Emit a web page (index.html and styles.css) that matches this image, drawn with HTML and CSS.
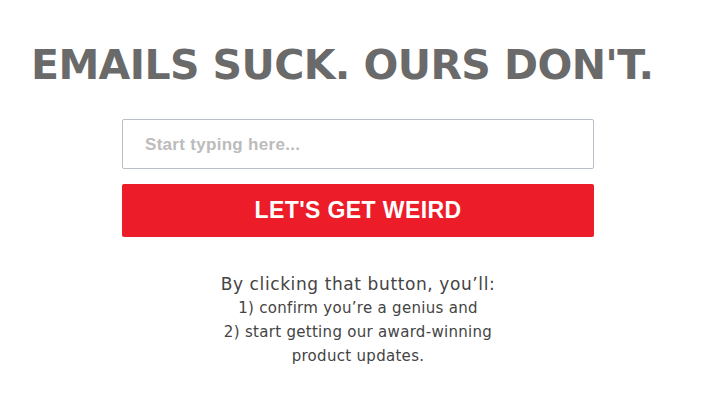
FILE: index.html
```html
<!DOCTYPE html>
<html>
<head>
<meta charset="utf-8">
<link rel="stylesheet" href="styles.css">
</head>
<body>
<div class="page">
  <h1 class="title">EMAILS SUCK. OURS DON'T.</h1>
  <form class="signup">
    <input class="email" type="text" placeholder="Start typing here...">
    <button class="cta" type="button">LET'S GET WEIRD</button>
  </form>
  <div class="note">
    <p class="lead">By clicking that button, you’ll:</p>
    <p class="line">1) confirm you’re a genius and</p>
    <p class="line">2) start getting our award-winning</p>
    <p class="line">product updates.</p>
  </div>
</div>
</body>
</html>
```
FILE: styles.css
```css
html, body { margin: 0; padding: 0; background: #fff; }
.page {
  width: 702px;
  height: 410px;
  display: flex;
  flex-direction: column;
  align-items: flex-start;
}
.title {
  margin: 42px 0 0 31px;
  font-family: "DejaVu Sans", sans-serif;
  font-weight: bold;
  font-size: 41px;
  line-height: 46px;
  color: #6a6a6a;
  letter-spacing: -0.6px;
  white-space: nowrap;
}
.signup {
  margin: 31px 0 0 122px;
  width: 472px;
  display: flex;
  flex-direction: column;
  gap: 15px;
}
.email {
  box-sizing: border-box;
  width: 100%;
  height: 50px;
  margin: 0;
  border: 1px solid #b9c0ca;
  border-radius: 2px;
  padding: 2px 22px 0;
  font-family: "Liberation Sans", Arial, sans-serif;
  font-weight: bold;
  font-size: 17px;
  letter-spacing: 0.3px;
  color: #333;
  outline: none;
}
.email::placeholder { color: #bcbcbc; }
.cta {
  width: 100%;
  height: 53px;
  margin: 0;
  border: none;
  border-radius: 2px;
  background: #ed1c29;
  color: #fff;
  font-family: "Liberation Sans", Arial, sans-serif;
  font-weight: bold;
  font-size: 23px;
  letter-spacing: 0.4px;
  padding: 0;
}
.note {
  margin: 35px 0 0 122px;
  width: 472px;
  text-align: center;
  font-family: "DejaVu Sans", sans-serif;
  color: #444;
}
.note p { margin: 0; }
.lead { font-size: 17px; line-height: 24px; letter-spacing: 0.6px; }
.line { font-size: 15px; line-height: 24px; letter-spacing: 0.3px; }
```
